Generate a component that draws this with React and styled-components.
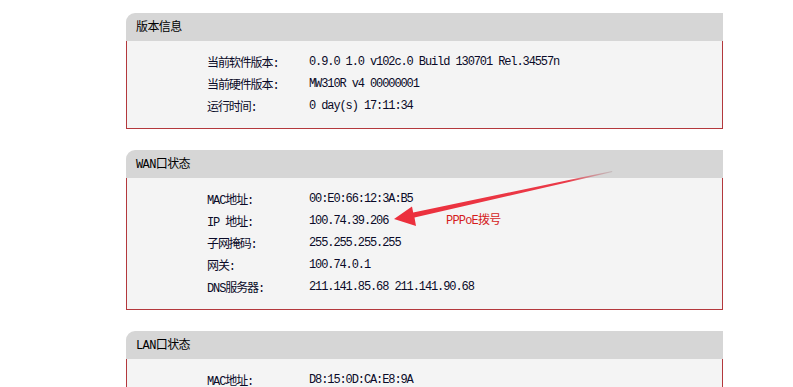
import React from 'react'
import styled, { createGlobalStyle } from 'styled-components'

const GlobalStyle = createGlobalStyle`
html, body {
  margin: 0;
  padding: 0;
  background: #fff;
}
body {
  font-family: "Liberation Mono", "Noto Sans CJK SC", monospace;
}
`

const sections = [
  {
    title: '版本信息',
    rows: [
      ['当前软件版本:', '0.9.0 1.0 v102c.0 Build 130701 Rel.34557n'],
      ['当前硬件版本:', 'MW310R v4 00000001'],
      ['运行时间:', '0 day(s) 17:11:34'],
    ],
  },
  {
    title: 'WAN口状态',
    rows: [
      ['MAC地址:', '00:E0:66:12:3A:B5'],
      ['IP 地址:', '100.74.39.206'],
      ['子网掩码:', '255.255.255.255'],
      ['网关:', '100.74.0.1'],
      ['DNS服务器:', '211.141.85.68 211.141.90.68'],
    ],
  },
  {
    title: 'LAN口状态',
    rows: [['MAC地址:', 'D8:15:0D:CA:E8:9A']],
  },
]

function App() {
  return (
    <Page>
      <GlobalStyle />
      <Column>
        {sections.map((s) => (
          <Panel key={s.title}>
            <Header>{s.title}</Header>
            <Body>
              {s.rows.map(([label, value]) => (
                <Row key={label}>
                  <Label>{label}</Label>
                  <Value>{value}</Value>
                </Row>
              ))}
            </Body>
          </Panel>
        ))}
      </Column>
      <Overlay width="793" height="387" viewBox="0 0 793 387">
        <defs>
          <linearGradient id="shaft" x1="394" y1="219" x2="612" y2="171" gradientUnits="userSpaceOnUse">
            <stop offset="0" stopColor="#ec2f3c" />
            <stop offset="0.8" stopColor="#ea3a48" />
            <stop offset="1" stopColor="#b8a8aa" stopOpacity="0.6" />
          </linearGradient>
        </defs>
        <polygon
          fill="url(#shaft)"
          points="394,219 412,206.5 413.2,212.6 612,171 612.4,172 414.5,217.6 416,226"
        />
      </Overlay>
      <Note>PPPoE拨号</Note>
    </Page>
  )
}

export default App

const Page = styled.div`
position: relative;
width: 793px;
height: 387px;
overflow: hidden;
`
const Column = styled.div`
display: flex;
flex-direction: column;
gap: 21px;
width: 597px;
padding: 13px 0 0 126px;
`
const Panel = styled.div`
display: flex;
flex-direction: column;
`
const Header = styled.div`
height: 28px;
line-height: 30px;
padding-left: 10px;
background: #d6d6d6;
border-top-left-radius: 9px;
color: #000;
font-size: 12px;
letter-spacing: -0.6px;
`
const Body = styled.div`
background: #f4f4f4;
border: 1px solid #b3383c;
border-top: none;
padding: 10px 0 11px 80px;
`
const Row = styled.div`
display: grid;
grid-template-columns: 102px 1fr;
height: 22px;
align-items: center;
font-size: 12px;
letter-spacing: -1.1px;
color: #0a0a28;
`
const Label = styled.span`
white-space: nowrap;
`
const Value = styled.span`
white-space: nowrap;
`
const Overlay = styled.svg`
position: absolute;
top: 0;
left: 0;
pointer-events: none;
`
const Note = styled.span`
position: absolute;
left: 446px;
top: 213px;
color: #d41c1c;
font-size: 12px;
letter-spacing: -0.8px;
line-height: 16px;
`
